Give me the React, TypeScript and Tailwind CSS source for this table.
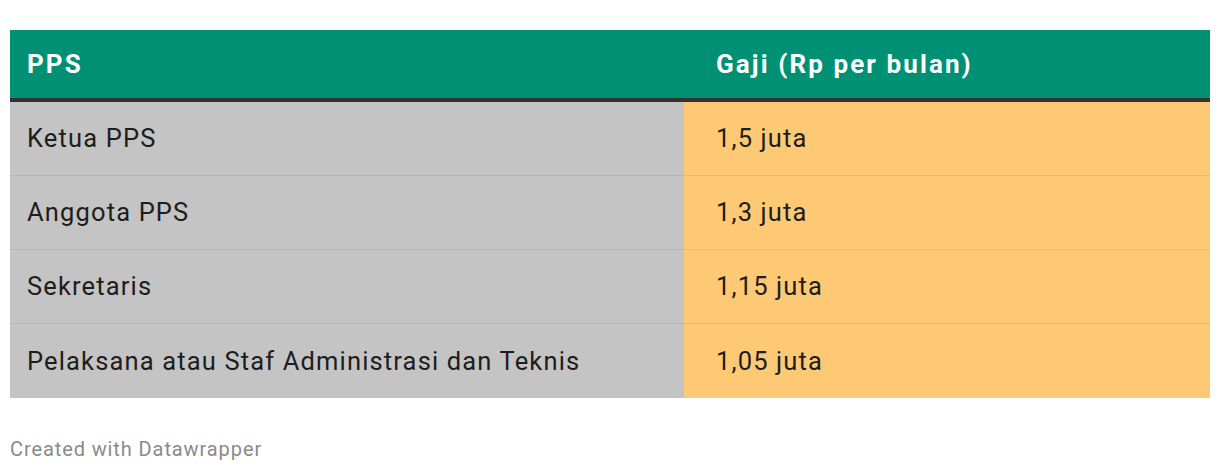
import React from "react";

const rows = [
  ["Ketua PPS", "1,5 juta"],
  ["Anggota PPS", "1,3 juta"],
  ["Sekretaris", "1,15 juta"],
  ["Pelaksana atau Staf Administrasi dan Teknis", "1,05 juta"],
];

export default function App() {
  return (
    <div
      className="w-[1220px] h-[472px] bg-white pt-[30px] px-[10px]"
      style={{ fontFamily: "Roboto, 'Liberation Sans', sans-serif" }}
    >
      <div className="w-[1200px]">
        <div className="flex h-[68px] bg-[#009174] border-b-[4px] border-[#333333] box-content text-white font-bold text-[26px] tracking-[2.1px]">
          <div className="w-[674px] pl-[17px] flex items-center">PPS</div>
          <div className="flex-1 pl-[32px] flex items-center">Gaji (Rp per bulan)</div>
        </div>
        {rows.map((r, i) => (
          <div key={i} className="flex text-[25.5px] tracking-[1.15px] text-[#1d1d1d]">
            <div
              className={`w-[674px] pl-[17px] h-[74px] flex items-center bg-[#c4c4c4] ${
                i < rows.length - 1 ? "border-b border-[#b5b5b5]" : ""
              }`}
            >
              {r[0]}
            </div>
            <div
              className={`flex-1 pl-[32px] h-[74px] flex items-center bg-[#fdc975] ${
                i < rows.length - 1 ? "border-b border-[#ebbc6f]" : ""
              }`}
            >
              {r[1]}
            </div>
          </div>
        ))}
        <div className="mt-[36px] text-[20px] tracking-[0.9px] text-[#8a8a8a]">Created with Datawrapper</div>
      </div>
    </div>
  );
}
